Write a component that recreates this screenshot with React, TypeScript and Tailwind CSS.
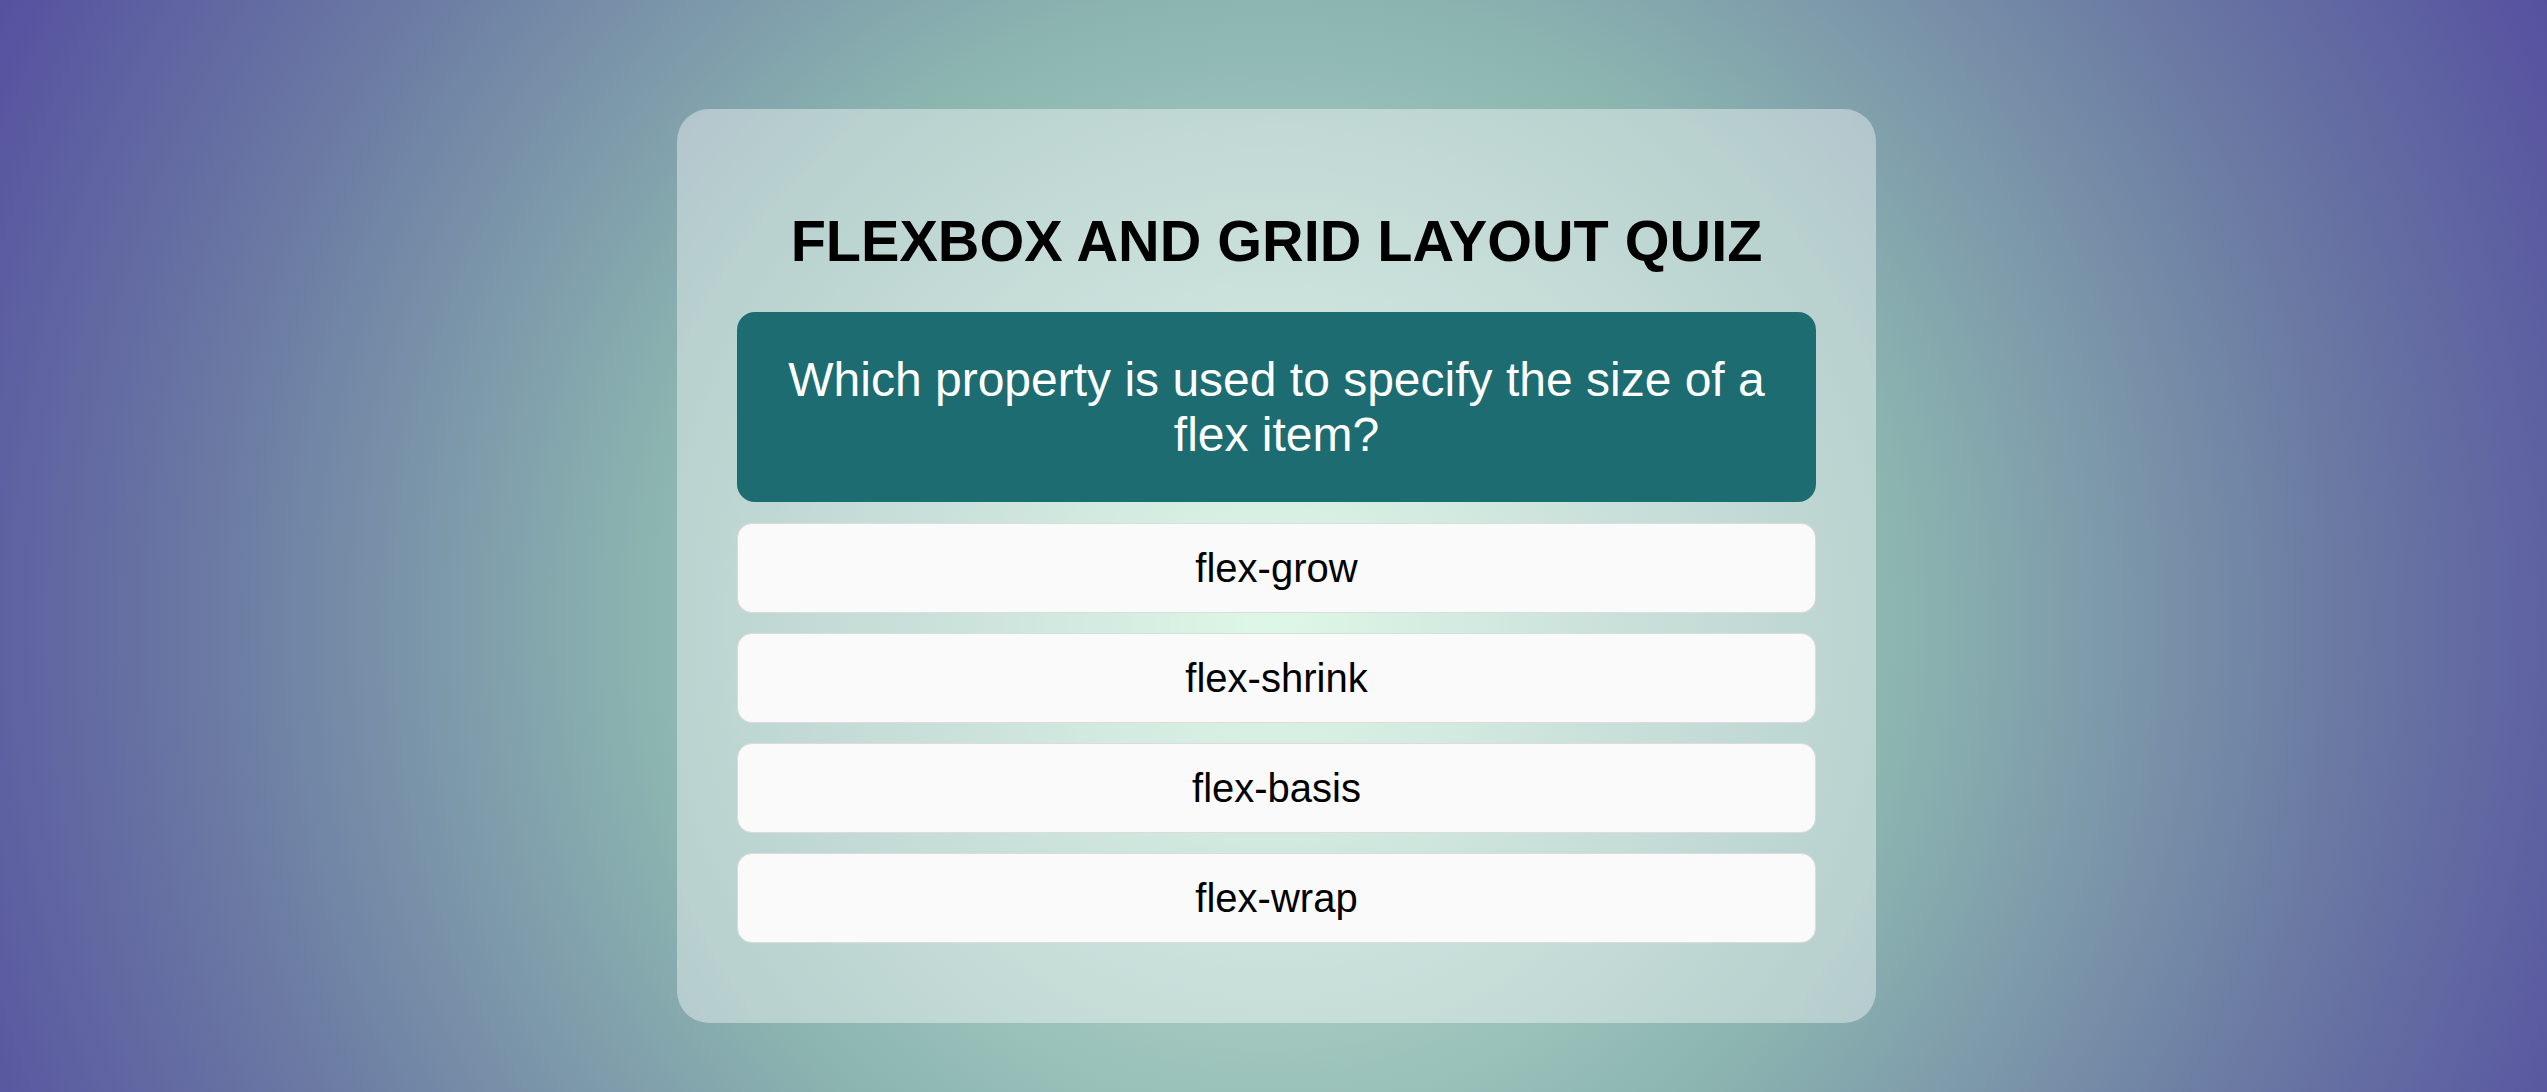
import React from "react";

const options = ["flex-grow", "flex-shrink", "flex-basis", "flex-wrap"];

export default function App() {
  return (
    <div className="min-h-screen w-full bg-[radial-gradient(circle_at_50%_57%,#c8f3d6_0%,#a6cbc2_25%,#8cb5b0_44%,#6b7aa3_75%,#5551a0_100%)] font-['Liberation_Sans',Arial,sans-serif] pt-[109px] pl-[6px] flex justify-center items-start">
      <div className="w-[1199px] rounded-[32px] bg-white/40 px-[60px] pt-[60px] pb-[80px]">
        <h1 className="my-[38.6px] text-center text-[57.6px] font-bold leading-[normal] text-black">
          FLEXBOX AND GRID LAYOUT QUIZ
        </h1>
        <div className="rounded-[18px] bg-[#1c6c71] px-[40px] py-[40px] text-center text-[48px] leading-[normal] text-white">
          Which property is used to specify the size of a flex item?
        </div>
        <div className="mt-[21px] flex flex-col gap-[20px]">
          {options.map((o) => (
            <button
              key={o}
              className="w-full rounded-[15px] border border-[#dcdcdc] bg-[#fafafa] py-[21.5px] text-center text-[40px] leading-[normal] text-black font-['Liberation_Sans',Arial,sans-serif]"
            >
              {o}
            </button>
          ))}
        </div>
      </div>
    </div>
  );
}
